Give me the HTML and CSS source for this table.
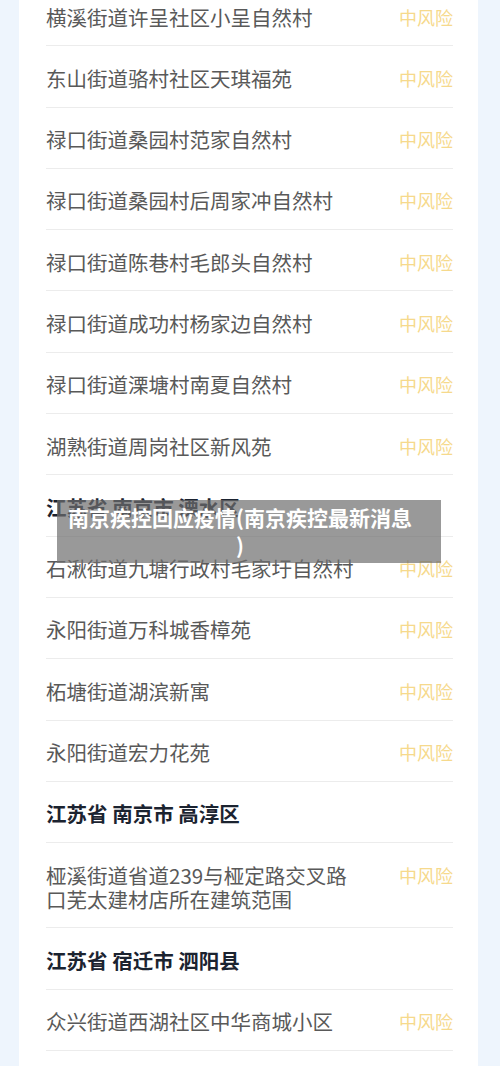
FILE: index.html
```html
<!DOCTYPE html>
<html lang="zh-CN">

<head>
    <meta charset="UTF-8">
    <title>南京疾控回应疫情</title>
    <link rel="stylesheet" href="styles.css">
</head>

<body>
    <div class="page">
        <ul class="list">
            <li class="row"><span class="place">横溪街道许呈社区小呈自然村</span><span class="risk">中风险</span></li>
            <li class="row"><span class="place">东山街道骆村社区天琪福苑</span><span class="risk">中风险</span></li>
            <li class="row"><span class="place">禄口街道桑园村范家自然村</span><span class="risk">中风险</span></li>
            <li class="row"><span class="place">禄口街道桑园村后周家冲自然村</span><span class="risk">中风险</span></li>
            <li class="row"><span class="place">禄口街道陈巷村毛郎头自然村</span><span class="risk">中风险</span></li>
            <li class="row"><span class="place">禄口街道成功村杨家边自然村</span><span class="risk">中风险</span></li>
            <li class="row"><span class="place">禄口街道溧塘村南夏自然村</span><span class="risk">中风险</span></li>
            <li class="row"><span class="place">湖熟街道周岗社区新风苑</span><span class="risk">中风险</span></li>
            <li class="row head">江苏省 南京市 溧水区</li>
            <li class="row"><span class="place">石湫街道九塘行政村毛家圩自然村</span><span class="risk">中风险</span></li>
            <li class="row"><span class="place">永阳街道万科城香樟苑</span><span class="risk">中风险</span></li>
            <li class="row"><span class="place">柘塘街道湖滨新寓</span><span class="risk">中风险</span></li>
            <li class="row"><span class="place">永阳街道宏力花苑</span><span class="risk">中风险</span></li>
            <li class="row head">江苏省 南京市 高淳区</li>
            <li class="row"><span class="place">桠溪街道省道239与桠定路交叉路口芜太建材店所在建筑范围</span><span class="risk">中风险</span></li>
            <li class="row head">江苏省 宿迁市 泗阳县</li>
            <li class="row"><span class="place">众兴街道西湖社区中华商城小区</span><span class="risk">中风险</span></li>
            <li class="row"><span class="place">&nbsp;</span></li>
        </ul>
        <div class="caption">南京疾控回应疫情(南京疾控最新消息)</div>
    </div>
</body>

</html>
```

FILE: styles.css
```css
* {
    margin: 0;
    padding: 0;
}

body {
    background-color: #eef5fd;
    font-family: "Noto Sans CJK SC", "Noto Sans", sans-serif;
    overflow: hidden;
}

.page {
    width: 459px;
    margin-left: 19px;
    height: 1066px;
    overflow: hidden;
    position: relative;
}

.list {
    list-style: none;
    background-color: #fff;
    padding: 0 25px 0 27px;
    margin-top: -15px;
}

.row {
    display: flex;
    justify-content: space-between;
    align-items: flex-start;
    padding: 19.5px 0 16.8px;
    border-bottom: 1px solid #ececec;
    font-size: 20.5px;
    line-height: 24px;
}

.place {
    color: #595959;
    width: 310px;
}

.risk {
    color: #f6d98c;
    font-size: 18px;
    white-space: nowrap;
}

.head {
    color: #1b2330;
    font-weight: bold;
}

.caption {
    position: absolute;
    top: 500px;
    left: 38px;
    width: 384px;
    box-sizing: border-box;
    padding: 3px 26px 4px 8px;
    background-color: rgba(110, 110, 110, 0.7);
    color: #fff;
    font-size: 21px;
    font-weight: bold;
    line-height: 28px;
    text-align: center;
    line-break: anywhere;
}
```
